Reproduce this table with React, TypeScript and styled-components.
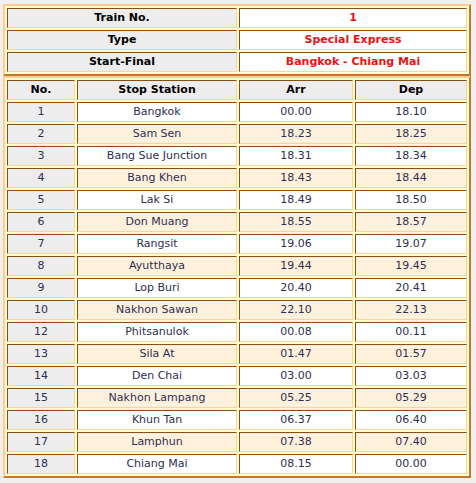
import React from "react"
import styled, { createGlobalStyle } from "styled-components"

const GlobalStyle = createGlobalStyle`
  html, body {
    margin: 0;
    padding: 0;
    background: #f1f0ee;
  }
  body {
    font-family: "DejaVu Sans", Verdana, sans-serif;
    font-size: 11px;
  }
`

const Page = styled.div`
  padding: 4px 0 0 3px;
`

const Table = styled.table<{ $gap?: number }>`
  border-collapse: separate;
  border-spacing: 2px;
  width: 468px;
  table-layout: fixed;
  background: #ffffcc;
  border-style: solid;
  border-width: 2px;
  border-color: #ffcc99 #bf7a30 #bf7a30 #ffcc99;
  margin-bottom: ${props => props.$gap || 0}px;
`

const Cell = styled.td<{ $bg?: string; $color?: string; $bold?: boolean }>`
  height: 18px;
  padding: 0;
  line-height: 18px;
  text-align: center;
  white-space: nowrap;
  border-style: solid;
  border-width: 1px;
  border-color: #8b4c16 #ffd39e #ffd39e #8b4c16;
  background: ${props => props.$bg || "#ffffff"};
  color: ${props => props.$color || "#2e2e52"};
  font-weight: ${props => (props.$bold ? "bold" : "normal")};
`

const HeadCell = styled(Cell).attrs({ as: "th" })`
  background: #ededed;
  color: #000000;
  font-weight: bold;
`

const info = [
  ["Train No.", "1"],
  ["Type", "Special Express"],
  ["Start-Final", "Bangkok - Chiang Mai"],
]

const stops = [
  ["1", "Bangkok", "00.00", "18.10"],
  ["2", "Sam Sen", "18.23", "18.25"],
  ["3", "Bang Sue Junction", "18.31", "18.34"],
  ["4", "Bang Khen", "18.43", "18.44"],
  ["5", "Lak Si", "18.49", "18.50"],
  ["6", "Don Muang", "18.55", "18.57"],
  ["7", "Rangsit", "19.06", "19.07"],
  ["8", "Ayutthaya", "19.44", "19.45"],
  ["9", "Lop Buri", "20.40", "20.41"],
  ["10", "Nakhon Sawan", "22.10", "22.13"],
  ["12", "Phitsanulok", "00.08", "00.11"],
  ["13", "Sila At", "01.47", "01.57"],
  ["14", "Den Chai", "03.00", "03.03"],
  ["15", "Nakhon Lampang", "05.25", "05.29"],
  ["16", "Khun Tan", "06.37", "06.40"],
  ["17", "Lamphun", "07.38", "07.40"],
  ["18", "Chiang Mai", "08.15", "00.00"],
]

const App = () => {
  return (
    <Page>
      <GlobalStyle />
      <Table>
        <colgroup>
          <col style={{ width: 230 }} />
          <col style={{ width: 228 }} />
        </colgroup>
        <tbody>
          {info.map(([label, value]) => (
            <tr key={label}>
              <HeadCell>{label}</HeadCell>
              <Cell $color="#ee1111" $bold>
                {value}
              </Cell>
            </tr>
          ))}
        </tbody>
      </Table>
      <Table>
        <colgroup>
          <col style={{ width: 68 }} />
          <col style={{ width: 160 }} />
          <col style={{ width: 114 }} />
          <col style={{ width: 112 }} />
        </colgroup>
        <thead>
          <tr>
            <HeadCell>No.</HeadCell>
            <HeadCell>Stop Station</HeadCell>
            <HeadCell>Arr</HeadCell>
            <HeadCell>Dep</HeadCell>
          </tr>
        </thead>
        <tbody>
          {stops.map((row, i) => {
            const bg = i % 2 === 0 ? "#ffffff" : "#fff1dc"
            return (
              <tr key={row[0]}>
                <Cell $bg="#ededed">{row[0]}</Cell>
                <Cell $bg={bg}>{row[1]}</Cell>
                <Cell $bg={bg}>{row[2]}</Cell>
                <Cell $bg={bg}>{row[3]}</Cell>
              </tr>
            )
          })}
        </tbody>
      </Table>
    </Page>
  )
}

export default App
